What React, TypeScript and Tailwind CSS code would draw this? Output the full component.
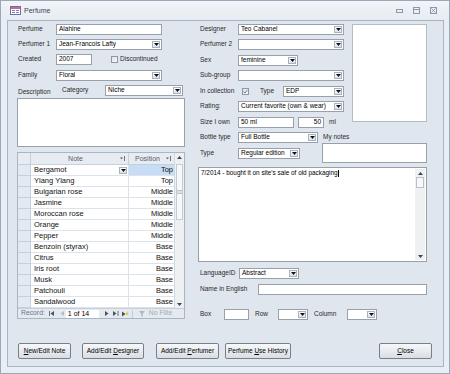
import React from 'react';

const notes: [string, string][] = [
  ['Bergamot', 'Top'],
  ['Ylang Ylang', 'Top'],
  ['Bulgarian rose', 'Middle'],
  ['Jasmine', 'Middle'],
  ['Moroccan rose', 'Middle'],
  ['Orange', 'Middle'],
  ['Pepper', 'Middle'],
  ['Benzoin (styrax)', 'Base'],
  ['Citrus', 'Base'],
  ['Iris root', 'Base'],
  ['Musk', 'Base'],
  ['Patchouli', 'Base'],
  ['Sandalwood', 'Base'],
];

function DropBtn() {
  return (
    <span className="ml-auto mr-[1px] w-[8px] h-[7px] flex items-center justify-center border border-[#a9b2bd] bg-gradient-to-b from-[#fbfcfd] to-[#dce2e9] shrink-0">
      <svg width="5" height="3" viewBox="0 0 5 3">
        <path d="M0 0H5L2.5 3Z" fill="#111" />
      </svg>
    </span>
  );
}

function Combo({ value = '', className = '' }: { value?: string; className?: string }) {
  return (
    <div className={`h-[11px] shrink-0 bg-white border border-[#98a1ab] flex items-center ${className}`}>
      <span className="pl-[2px] text-[6.5px] leading-none whitespace-nowrap overflow-hidden text-black">{value}</span>
      <DropBtn />
    </div>
  );
}

function TextBox({ value = '', className = '', right = false }: { value?: string; className?: string; right?: boolean }) {
  return (
    <div
      className={`h-[11px] shrink-0 bg-white border border-[#98a1ab] flex items-center px-[2px] text-[6.5px] leading-none text-black whitespace-nowrap overflow-hidden ${right ? 'justify-end' : ''} ${className}`}
    >
      {value}
    </div>
  );
}

function Label({ children, className = 'w-[38px]' }: { children: React.ReactNode; className?: string }) {
  return <span className={`shrink-0 text-[6.5px] leading-none text-[#2a2a2a] whitespace-nowrap ${className}`}>{children}</span>;
}

function Check({ checked = false, className = '' }: { checked?: boolean; className?: string }) {
  return (
    <span className={`w-[7px] h-[7px] shrink-0 border border-[#8e98a4] bg-gradient-to-br from-[#dfe3e8] to-[#f8f9fa] flex items-center justify-center ${className}`}>
      {checked && (
        <svg width="5" height="5" viewBox="0 0 5 5">
          <path d="M0.5 2.6L2 4L4.5 0.8" stroke="#5d6d80" strokeWidth="0.9" fill="none" />
        </svg>
      )}
    </span>
  );
}

function Btn({ children, className = '' }: { children: React.ReactNode; className?: string }) {
  return (
    <div
      className={`h-[16px] shrink-0 flex items-center justify-center border border-[#76808c] rounded-[2px] bg-gradient-to-b from-[#f7f8f9] to-[#d9dee4] text-[6.5px] leading-none text-black whitespace-nowrap ${className}`}
    >
      <span>{children}</span>
    </div>
  );
}

function SortIcon() {
  return (
    <svg width="6" height="5" viewBox="0 0 6 5" className="shrink-0 mr-[2px]">
      <path d="M0 1.5H3L1.5 3.2Z" fill="#4b5563" />
      <path d="M4.5 0V5" stroke="#4b5563" strokeWidth="0.8" />
    </svg>
  );
}

function ScrollArrow({ up }: { up?: boolean }) {
  return (
    <div className="h-[8px] flex items-center justify-center shrink-0">
      <svg width="5" height="3" viewBox="0 0 5 3">
        <path d={up ? 'M0 3H5L2.5 0Z' : 'M0 0H5L2.5 3Z'} fill="#3d4651" />
      </svg>
    </div>
  );
}

function NoteGrid() {
  return (
    <div className="mt-[5px] w-[168px] border border-[#a9b5c3] bg-white flex flex-col">
      <div className="flex">
        <div className="w-[157px] flex flex-col">
          <div className="h-[12px] flex bg-[#e7ecf2] border-b border-[#c6d0db] text-[7px] leading-none text-[#56616f]">
            <div className="w-[13px] border-r border-[#c6d0db]" />
            <div className="w-[98px] border-r border-[#c6d0db] flex items-center">
              <span className="flex-1 text-center">Note</span>
              <SortIcon />
            </div>
            <div className="flex-1 flex items-center">
              <span className="flex-1 text-center">Position</span>
              <SortIcon />
            </div>
          </div>
          {notes.map(([n, p], i) => (
            <div key={n} className="h-[11px] flex text-[7.5px] leading-none text-[#111]">
              <div className="w-[13px] bg-[#e3e9f0] border-r border-b border-[#c6d0db]" />
              <div
                className={`w-[98px] border-r border-b border-[#dde3ea] flex items-center pl-[3px] ${i === 0 ? 'bg-white' : ''}`}
              >
                <span className="whitespace-nowrap">{n}</span>
                {i === 0 && <DropBtn />}
              </div>
              <div
                className={`flex-1 border-b border-[#dde3ea] flex items-center justify-end pr-[1px] ${i === 0 ? 'bg-[#c7ddf5]' : ''}`}
              >
                {p}
              </div>
            </div>
          ))}
        </div>
        <div className="w-[10px] bg-[#eef0f2] border-l border-[#d3d9e0] flex flex-col">
          <ScrollArrow up />
          <div className="mx-[1px] mt-[3px] h-[56px] bg-[#f7f8f9] border border-[#c4cad1] flex items-center justify-center">
            <svg width="5" height="4" viewBox="0 0 5 4">
              <path d="M0 0.5H5M0 2H5M0 3.5H5" stroke="#9aa3ad" strokeWidth="0.6" />
            </svg>
          </div>
          <div className="flex-1" />
          <ScrollArrow />
        </div>
      </div>
      <div className="h-[10px] bg-[#e5eaf0] border-t border-[#c6d0db] flex items-center text-[6.8px] leading-none text-[#6c7786]">
        <span className="ml-[3px]">Record:</span>
        <svg width="6" height="5" viewBox="0 0 6 5" className="ml-[4px]">
          <path d="M0.5 0V5" stroke="#4a5360" strokeWidth="0.8" />
          <path d="M5 0V5L1.5 2.5Z" fill="#4a5360" />
        </svg>
        <svg width="4" height="5" viewBox="0 0 4 5" className="ml-[5px]">
          <path d="M4 0V5L0.5 2.5Z" fill="#b5bcc5" />
        </svg>
        <div className="ml-[2px] w-[33px] h-[8px] bg-white flex items-center pl-[2px] text-black text-[7px]">1 of 14</div>
        <svg width="4" height="5" viewBox="0 0 4 5" className="ml-[6px]">
          <path d="M0 0V5L3.5 2.5Z" fill="#4a5360" />
        </svg>
        <svg width="6" height="5" viewBox="0 0 6 5" className="ml-[4px]">
          <path d="M0 0V5L3.5 2.5Z" fill="#4a5360" />
          <path d="M5 0V5" stroke="#4a5360" strokeWidth="0.8" />
        </svg>
        <svg width="7" height="6" viewBox="0 0 7 6" className="ml-[3px]">
          <path d="M0 0.5V5.5L3.5 3Z" fill="#4a5360" />
          <path d="M5 0.5L5.6 1.9L7 2L5.9 2.9L6.3 4.3L5 3.5L3.9 4.3L4.2 2.9L3.2 2L4.5 1.9Z" fill="#e8c22c" />
        </svg>
        <span className="ml-[3px] h-[8px] w-px bg-[#c2cad4]" />
        <svg width="6" height="6" viewBox="0 0 6 6" className="ml-[6px]">
          <path d="M0 0H6L3.7 2.8V6L2.3 5V2.8Z" fill="#aeb6c0" />
        </svg>
        <span className="ml-[4px] whitespace-nowrap text-[#a3abb6]">No Filte</span>
      </div>
    </div>
  );
}

function LeftColumn() {
  return (
    <div className="w-[168px] shrink-0 flex flex-col">
      <div className="h-[11px] flex items-center pl-[1px]">
        <Label>Perfume</Label>
        <TextBox value="Alahine" className="w-[106px]" />
      </div>
      <div className="h-[11px] mt-[4px] flex items-center pl-[1px]">
        <Label>Perfumer 1</Label>
        <Combo value="Jean-Francois Lafty" className="w-[106px]" />
      </div>
      <div className="h-[11px] mt-[4px] flex items-center pl-[1px]">
        <Label>Created</Label>
        <TextBox value="2007" className="w-[36px]" />
        <Check className="ml-[19px]" />
        <Label className="ml-[2px]">Discontinued</Label>
      </div>
      <div className="h-[11px] mt-[5px] flex items-center pl-[1px]">
        <Label>Family</Label>
        <Combo value="Floral" className="w-[106px]" />
      </div>
      <div className="h-[11px] mt-[4px] flex items-center pl-[1px]">
        <Label className="w-[44px] pt-[3px]">Description</Label>
        <Label className="w-[43px]">Category</Label>
        <Combo value="Niche" className="w-[78px]" />
      </div>
      <div className="mt-[2px] h-[49px] bg-white border border-[#98a1ab]" />
      <NoteGrid />
    </div>
  );
}

function RightColumn() {
  return (
    <div className="w-[229px] shrink-0 flex flex-col">
      <div className="flex items-start">
        <div className="w-[146px] flex flex-col">
          <div className="h-[11px] flex items-center">
            <Label className="w-[40px] pl-[2px]">Designer</Label>
            <Combo value="Teo Cabanel" className="w-[106px]" />
          </div>
          <div className="h-[11px] mt-[4px] flex items-center">
            <Label className="w-[40px] pl-[2px]">Perfumer 2</Label>
            <Combo className="w-[106px]" />
          </div>
          <div className="h-[11px] mt-[5px] flex items-center">
            <Label className="w-[40px] pl-[2px]">Sex</Label>
            <Combo value="feminine" className="w-[60px]" />
          </div>
          <div className="h-[11px] mt-[4px] flex items-center">
            <Label className="w-[40px] pl-[2px]">Sub-group</Label>
            <Combo className="w-[106px]" />
          </div>
          <div className="h-[11px] mt-[5px] flex items-center">
            <Label className="w-[40px] pl-[2px]">In collection</Label>
            <Check checked className="ml-[4px]" />
            <Label className="ml-[11px] w-[23px]">Type</Label>
            <Combo value="EDP" className="w-[61px]" />
          </div>
          <div className="h-[11px] mt-[4px] flex items-center">
            <Label className="w-[40px] pl-[2px]">Rating:</Label>
            <Combo value="Current favorite (own & wear)" className="w-[106px]" />
          </div>
          <div className="h-[11px] mt-[5px] flex items-center">
            <Label className="w-[40px] pl-[2px]">Size I own</Label>
            <TextBox value="50 ml" className="w-[56px]" />
            <TextBox value="50" right className="w-[26px] ml-[4px]" />
            <Label className="ml-[5px]">ml</Label>
          </div>
        </div>
        <div className="ml-auto w-[75px] h-[98px] bg-white border border-[#b4bcc6]" />
      </div>
      <div className="mt-[4px] flex">
        <div className="w-[124px] flex flex-col">
          <div className="h-[11px] flex items-center">
            <Label className="w-[40px] pl-[2px]">Bottle type</Label>
            <Combo value="Full Bottle" className="w-[80px]" />
          </div>
          <div className="h-[11px] mt-[5px] flex items-center">
            <Label className="w-[40px] pl-[2px]">Type</Label>
            <Combo value="Regular edition" className="w-[62px]" />
          </div>
        </div>
        <div className="flex-1 flex flex-col">
          <div className="h-[11px] flex items-center pl-[1px]">
            <Label>My notes</Label>
          </div>
          <div className="h-[20px] bg-white border border-[#98a1ab]" />
        </div>
      </div>
      <div className="mt-[4px] h-[95px] bg-white border border-[#98a1ab] flex">
        <div className="flex-1 pl-[2px] pt-[2px] text-[6.4px] leading-none text-black whitespace-nowrap">
          7/2014 - bought it on site's sale of old packaging
          <span className="inline-block w-px h-[7px] bg-black align-middle" />
        </div>
        <div className="w-[10px] mr-[1px] my-[1px] bg-[#eef0f2] flex flex-col">
          <ScrollArrow up />
          <div className="mx-[1px] h-[11px] bg-[#f7f8f9] border border-[#b9c0c8]" />
          <div className="flex-1" />
          <ScrollArrow />
        </div>
      </div>
      <div className="h-[11px] mt-[6px] flex items-center">
        <Label className="w-[41px] pl-[2px]">LanguageID</Label>
        <Combo value="Abstract" className="w-[60px]" />
      </div>
      <div className="h-[11px] mt-[5px] flex items-center">
        <Label className="w-[60px] pl-[2px]">Name in English</Label>
        <TextBox className="flex-1" />
      </div>
      <div className="h-[11px] mt-[14px] flex items-center">
        <Label className="w-[26px] pl-[2px]">Box</Label>
        <TextBox className="w-[25px]" />
        <Label className="ml-[6px] w-[23px]">Row</Label>
        <Combo className="w-[30px]" />
        <Label className="ml-[6px] w-[33px]">Column</Label>
        <Combo className="w-[30px]" />
      </div>
    </div>
  );
}

export default function App() {
  return (
    <div className="w-[450px] h-[374px] bg-[#e9eef4] border border-[#9ba8b7] flex flex-col overflow-hidden font-['Liberation_Sans',Arial,sans-serif]">
      <div className="h-[19px] shrink-0 flex items-center bg-gradient-to-b from-[#f1f4f8] to-[#e7ecf2]">
        <svg width="11" height="9" viewBox="0 0 11 9" className="ml-[9px]">
          <rect x="0.5" y="0.5" width="10" height="8" fill="#fff" stroke="#7b6a94" />
          <rect x="1" y="1" width="9" height="2" fill="#c8679a" />
          <path d="M2 4.5H5M2 6.5H5M6 4.5H9M6 6.5H9" stroke="#4f7fbf" strokeWidth="0.9" />
        </svg>
        <span className="ml-[3px] text-[7px] leading-none text-[#3a4657]">Perfume</span>
        <div className="ml-auto mr-[12px] flex items-center gap-[10px]">
          <svg width="7" height="4" viewBox="0 0 7 4">
            <rect x="0.5" y="0.5" width="6" height="3" fill="none" stroke="#8c99a8" />
          </svg>
          <svg width="7" height="7" viewBox="0 0 7 7">
            <rect x="0.5" y="0.5" width="6" height="6" fill="none" stroke="#8c99a8" />
            <path d="M1 2.5H6" stroke="#8c99a8" />
          </svg>
          <svg width="7" height="7" viewBox="0 0 7 7">
            <rect x="0.5" y="0.5" width="6" height="6" fill="none" stroke="#8c99a8" />
            <path d="M1.5 1.5L5.5 5.5M5.5 1.5L1.5 5.5" stroke="#8c99a8" strokeWidth="0.9" />
          </svg>
        </div>
      </div>
      <div className="ml-[6px] w-[437px] h-[347px] shrink-0 border border-[#a7b4c3] bg-[#dfe6ee] flex flex-col pl-[9px] pt-[3px]">
        <div className="flex items-start gap-[13px]">
          <LeftColumn />
          <RightColumn />
        </div>
        <div className="mt-[23px] flex items-center">
          <Btn className="ml-[1px] w-[53px]">
            <span className="underline">N</span>ew/Edit Note
          </Btn>
          <Btn className="ml-[11px] w-[62px]">
            Add/Edit <span className="underline">D</span>esigner
          </Btn>
          <Btn className="ml-[12px] w-[63px]">
            Add/Edit <span className="underline">P</span>erfumer
          </Btn>
          <Btn className="ml-[6px] w-[66px]">
            Perfume <span className="underline">U</span>se History
          </Btn>
          <Btn className="ml-auto mr-[11px] w-[53px]">
            <span className="underline">C</span>lose
          </Btn>
        </div>
      </div>
    </div>
  );
}
